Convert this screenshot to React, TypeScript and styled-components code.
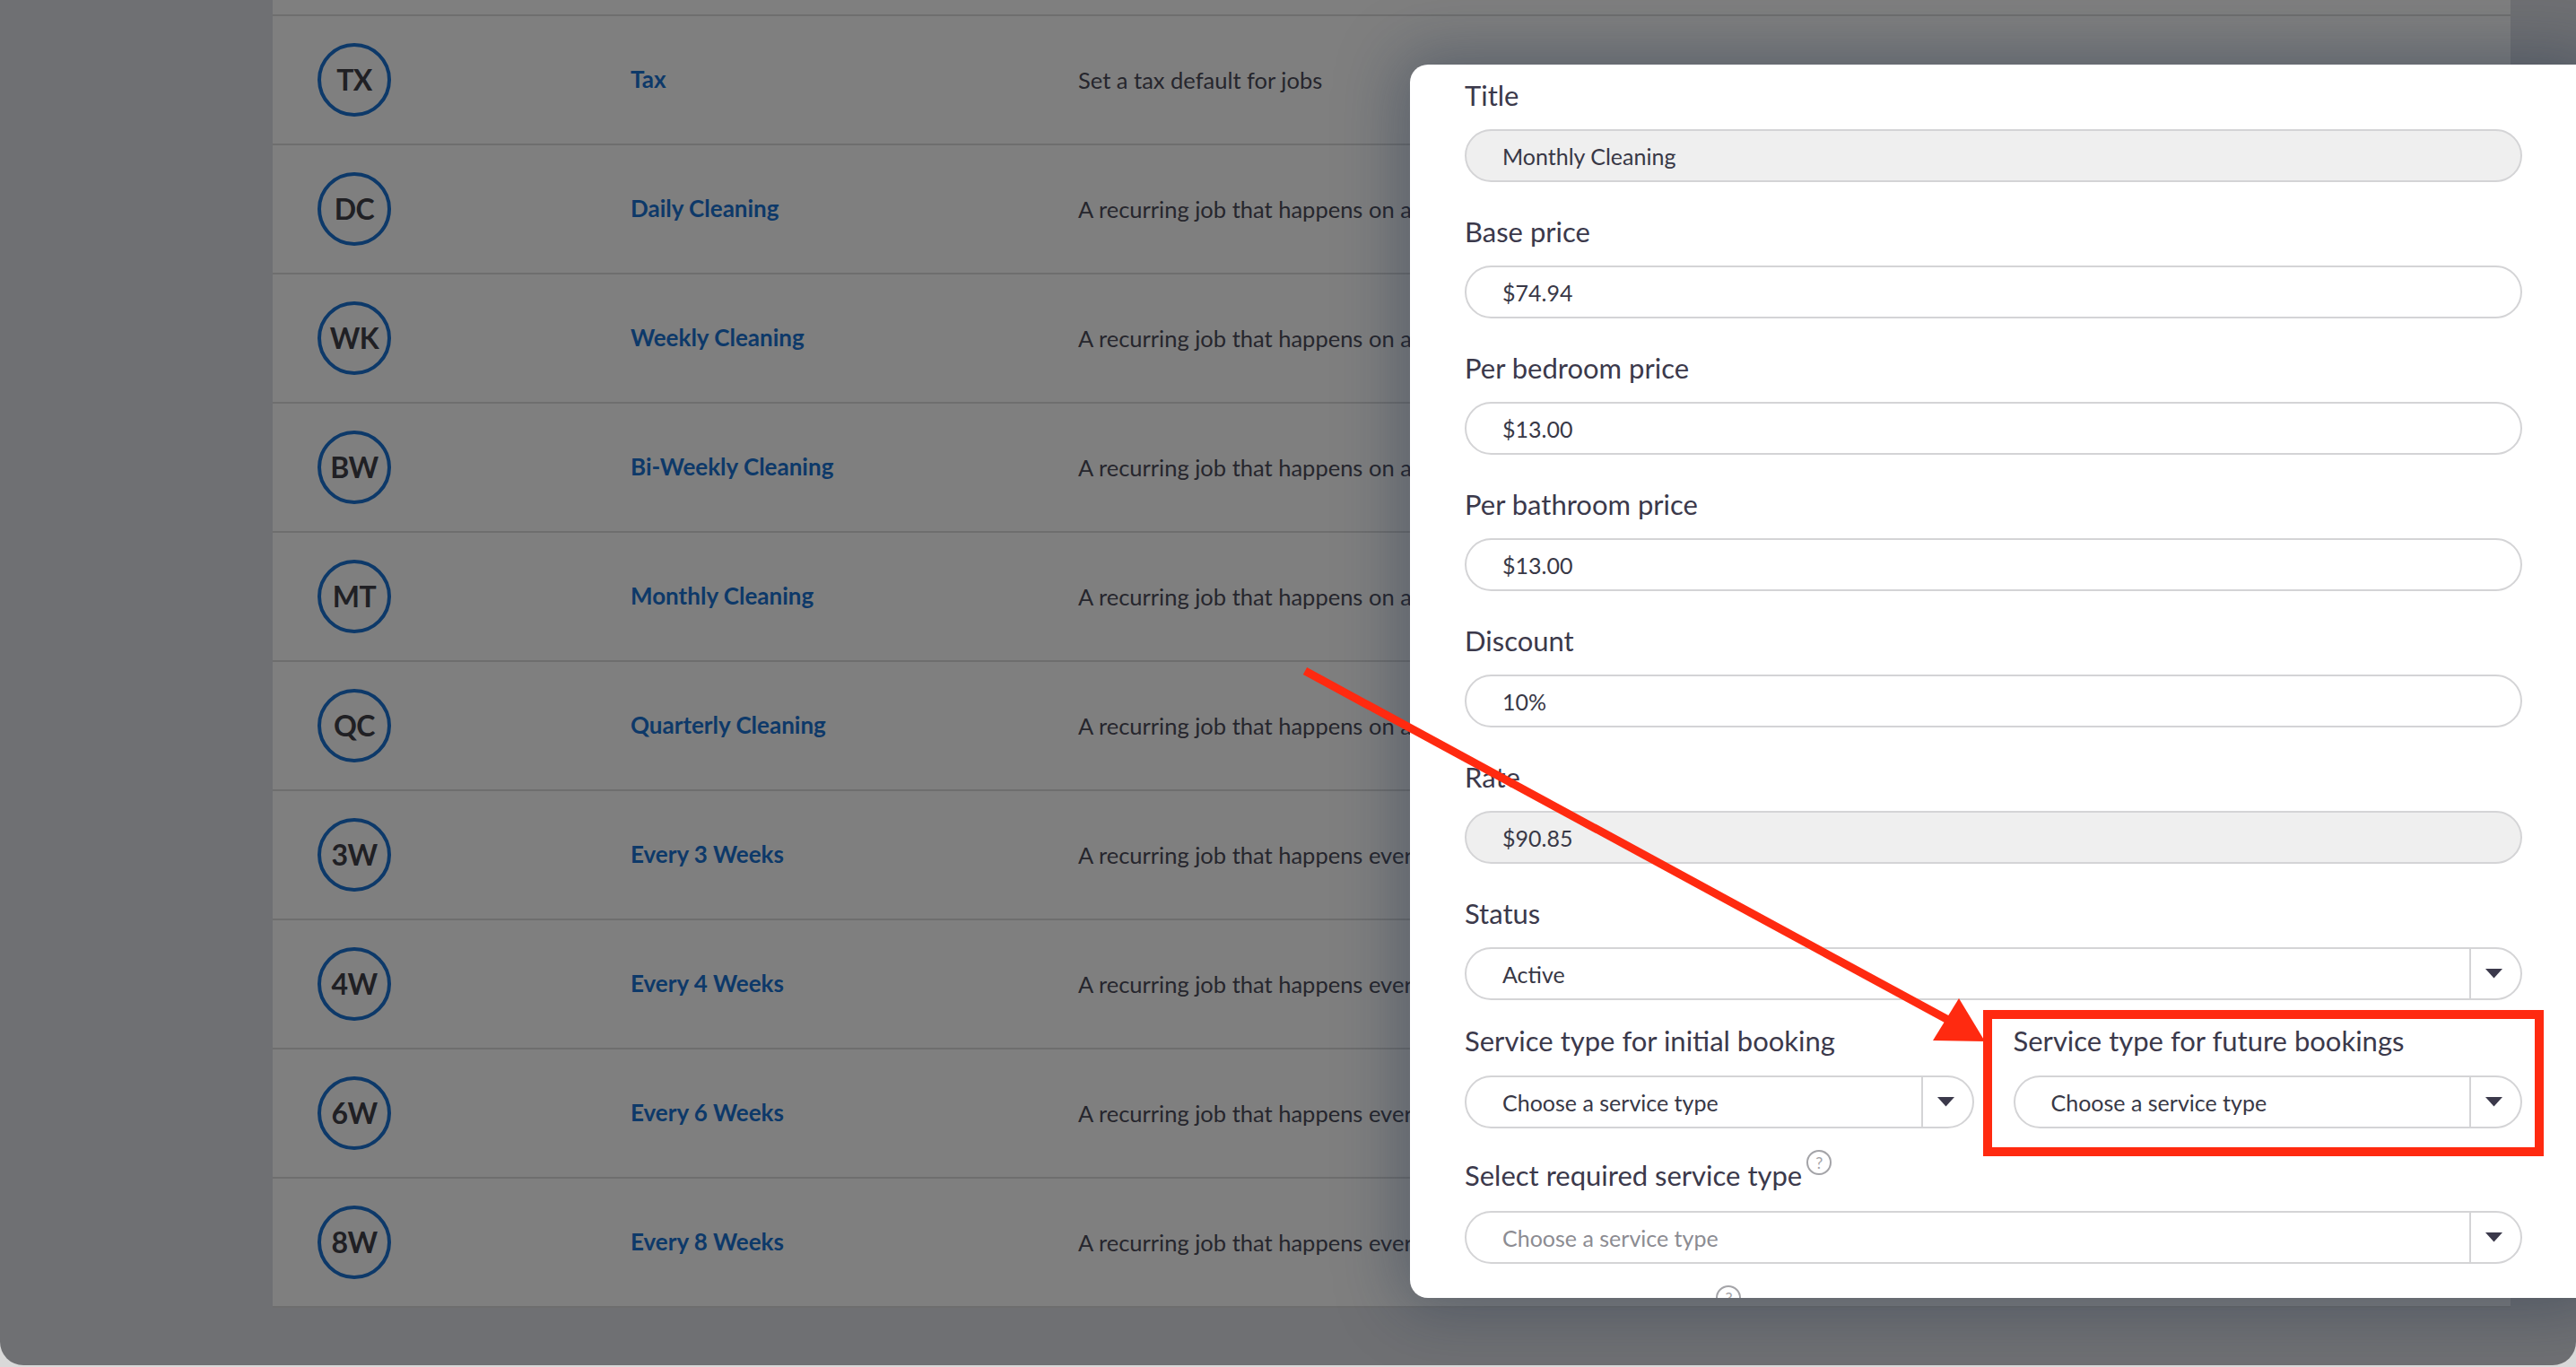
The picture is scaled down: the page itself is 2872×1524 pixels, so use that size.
import React from "react";
import styled, { createGlobalStyle } from "styled-components";

const GlobalStyle = createGlobalStyle`
  html, body {
    margin: 0;
    padding: 0;
    background: #d9d9d9;
  }
  body {
    font-family: Lato, "Noto Sans", sans-serif;
  }
  #root {
    width: 2872px;
    height: 1524px;
  }
  * { box-sizing: border-box; }
`;

const Screen = styled.div`
  position: relative;
  width: 2872px;
  height: 1522px;
  overflow: hidden;
  background: #dfe1e6;
  border-radius: 0 0 26px 26px;
`;

const Page = styled.main`
  padding-left: 304px;
`;

const Card = styled.section`
  width: 2495px;
  background: #ffffff;
`;

const RowEnd = styled.div`
  height: 18px;
  border-bottom: 2px solid #dcdcdc;
`;

const Row = styled.div`
  display: grid;
  grid-template-columns: 349px 499px 1fr;
  align-items: center;
  height: 144px;
  padding-left: 50px;
  border-bottom: 2px solid #dcdcdc;
`;

const Badge = styled.div`
  width: 82px;
  height: 82px;
  border-radius: 50%;
  border: 4px solid #1a72d2;
  display: flex;
  align-items: center;
  justify-content: center;
  font: 700 32px/1 Lato, "Noto Sans", sans-serif;
  color: #404048;
  letter-spacing: -0.5px;
`;

const RowLink = styled.a`
  font: 700 26px/1.2 Lato, "Noto Sans", sans-serif;
  color: #1a72d2;
  text-decoration: none;
`;

const RowDesc = styled.span`
  font: 400 25.5px/1.2 Lato, "Noto Sans", sans-serif;
  color: #4c4c5a;
  white-space: nowrap;
`;

const Overlay = styled.div`
  position: absolute;
  inset: 0;
  background: rgba(0, 0, 0, 0.5);
`;

const Modal = styled.div`
  position: absolute;
  left: 1572px;
  top: 72px;
  width: 1320px;
  height: 1375px;
  background: #ffffff;
  border-radius: 20px;
  overflow: hidden;
  box-shadow: 0 0 70px 12px rgba(20, 40, 70, 0.35);
`;

const ModalBody = styled.form`
  display: flex;
  flex-direction: column;
  padding: 12px 0 0 61px;
  width: 1240px;
`;

const Field = styled.div<{ $gap?: number }>`
  display: flex;
  flex-direction: column;
  margin-top: ${(p) => p.$gap ?? 33}px;
`;

const TwoCols = styled.div<{ $gap?: number }>`
  display: grid;
  grid-template-columns: 1fr 1fr;
  column-gap: 44px;
  margin-top: ${(p) => p.$gap ?? 33}px;
`;

const Label = styled.label<{ $mb?: number }>`
  display: flex;
  align-items: flex-start;
  padding-top: 2px;
  font: 400 31px/40px Lato, "Noto Sans", sans-serif;
  color: #3b394b;
  margin-bottom: ${(p) => p.$mb ?? 18}px;
  white-space: nowrap;
`;

const Help = styled.span`
  display: inline-flex;
  align-items: center;
  justify-content: center;
  width: 28px;
  height: 28px;
  margin: -8px 0 0 5px;
  border: 2px solid #a4a4a8;
  border-radius: 50%;
  font: 400 18px/1 Lato, "Noto Sans", sans-serif;
  color: #a4a4a8;
`;

const TextInput = styled.input<{ $disabledLook?: boolean }>`
  width: 100%;
  height: 59px;
  border: 2px solid #d4d4d6;
  border-radius: 30px;
  background: ${(p) => (p.$disabledLook ? "#efefef" : "#ffffff")};
  padding: 0 0 0 40px;
  font: 400 25px Lato, "Noto Sans", sans-serif;
  color: #383846;
  outline: none;
`;

const SelectBox = styled.div`
  display: flex;
  align-items: stretch;
  width: 100%;
  height: 59px;
  border: 2px solid #d4d4d6;
  border-radius: 30px;
  background: #ffffff;
  overflow: hidden;
`;

const SelectValue = styled.span<{ $placeholder?: boolean }>`
  flex: 1;
  display: flex;
  align-items: center;
  padding-left: 40px;
  font: 400 25px Lato, "Noto Sans", sans-serif;
  color: ${(p) => (p.$placeholder ? "#8c8c92" : "#383846")};
`;

const Caret = styled.span`
  width: 57px;
  display: flex;
  align-items: center;
  justify-content: center;
  border-left: 2px solid #d4d4d6;
  padding-right: 4px;
`;

const Annotations = styled.svg`
  position: absolute;
  left: 0;
  top: 0;
  pointer-events: none;
`;

type RowData = { code: string; title: string; desc: string };

const rows: RowData[] = [
  { code: "TX", title: "Tax", desc: "Set a tax default for jobs" },
  { code: "DC", title: "Daily Cleaning", desc: "A recurring job that happens on a daily basis" },
  { code: "WK", title: "Weekly Cleaning", desc: "A recurring job that happens on a weekly basis" },
  { code: "BW", title: "Bi-Weekly Cleaning", desc: "A recurring job that happens on a bi-weekly basis" },
  { code: "MT", title: "Monthly Cleaning", desc: "A recurring job that happens on a monthly basis" },
  { code: "QC", title: "Quarterly Cleaning", desc: "A recurring job that happens on a quarterly basis" },
  { code: "3W", title: "Every 3 Weeks", desc: "A recurring job that happens every 3 weeks" },
  { code: "4W", title: "Every 4 Weeks", desc: "A recurring job that happens every 4 weeks" },
  { code: "6W", title: "Every 6 Weeks", desc: "A recurring job that happens every 6 weeks" },
  { code: "8W", title: "Every 8 Weeks", desc: "A recurring job that happens every 8 weeks" },
];

const CaretIcon = () => (
  <svg width="19" height="11" viewBox="0 0 19 11">
    <polygon points="0,0 19,0 9.5,10.5" fill="#3b394b" />
  </svg>
);

const Select = ({ value, placeholder }: { value: string; placeholder?: boolean }) => (
  <SelectBox>
    <SelectValue $placeholder={placeholder}>{value}</SelectValue>
    <Caret>
      <CaretIcon />
    </Caret>
  </SelectBox>
);

const TextField = ({
  label,
  value,
  disabled,
  gap,
}: {
  label: string;
  value: string;
  disabled?: boolean;
  gap?: number;
}) => (
  <Field $gap={gap}>
    <Label>{label}</Label>
    <TextInput readOnly value={value} $disabledLook={disabled} />
  </Field>
);

export default function App() {
  return (
    <>
      <GlobalStyle />
      <Screen>
        <Page>
          <Card>
            <RowEnd />
            {rows.map((r) => (
              <Row key={r.code}>
                <Badge>{r.code}</Badge>
                <RowLink href="#">{r.title}</RowLink>
                <RowDesc>{r.desc}</RowDesc>
              </Row>
            ))}
          </Card>
        </Page>

        <Overlay />

        <Modal>
          <ModalBody onSubmit={(e) => e.preventDefault()}>
            <TextField label="Title" value="Monthly Cleaning" disabled gap={0} />
            <TextField label="Base price" value="$74.94" />
            <TextField label="Per bedroom price" value="$13.00" />
            <TextField label="Per bathroom price" value="$13.00" />
            <TextField label="Discount" value="10%" />
            <TextField label="Rate" value="$90.85" disabled />
            <Field>
              <Label>Status</Label>
              <Select value="Active" />
            </Field>
            <TwoCols $gap={23}>
              <Field $gap={0}>
                <Label $mb={19}>Service type for initial booking</Label>
                <Select value="Choose a service type" />
              </Field>
              <Field $gap={0}>
                <Label $mb={19}>Service type for future bookings</Label>
                <Select value="Choose a service type" />
              </Field>
            </TwoCols>
            <Field $gap={30}>
              <Label $mb={20}>
                Select required service type
                <Help>?</Help>
              </Label>
              <Select value="Choose a service type" placeholder />
            </Field>
            <Field $gap={30}>
              <Label>
                Visible to customers
                <Help>?</Help>
              </Label>
            </Field>
          </ModalBody>
        </Modal>

        <Annotations width="2872" height="1524" viewBox="0 0 2872 1524">
          <line x1="1455" y1="748" x2="2172" y2="1137" stroke="#ff2a10" strokeWidth="9" />
          <polygon points="2213,1161 2155,1160 2184,1113" fill="#ff2a10" />
          <rect x="2216" y="1131" width="615" height="153" fill="none" stroke="#ff2a10" strokeWidth="10" />
        </Annotations>
      </Screen>
    </>
  );
}
